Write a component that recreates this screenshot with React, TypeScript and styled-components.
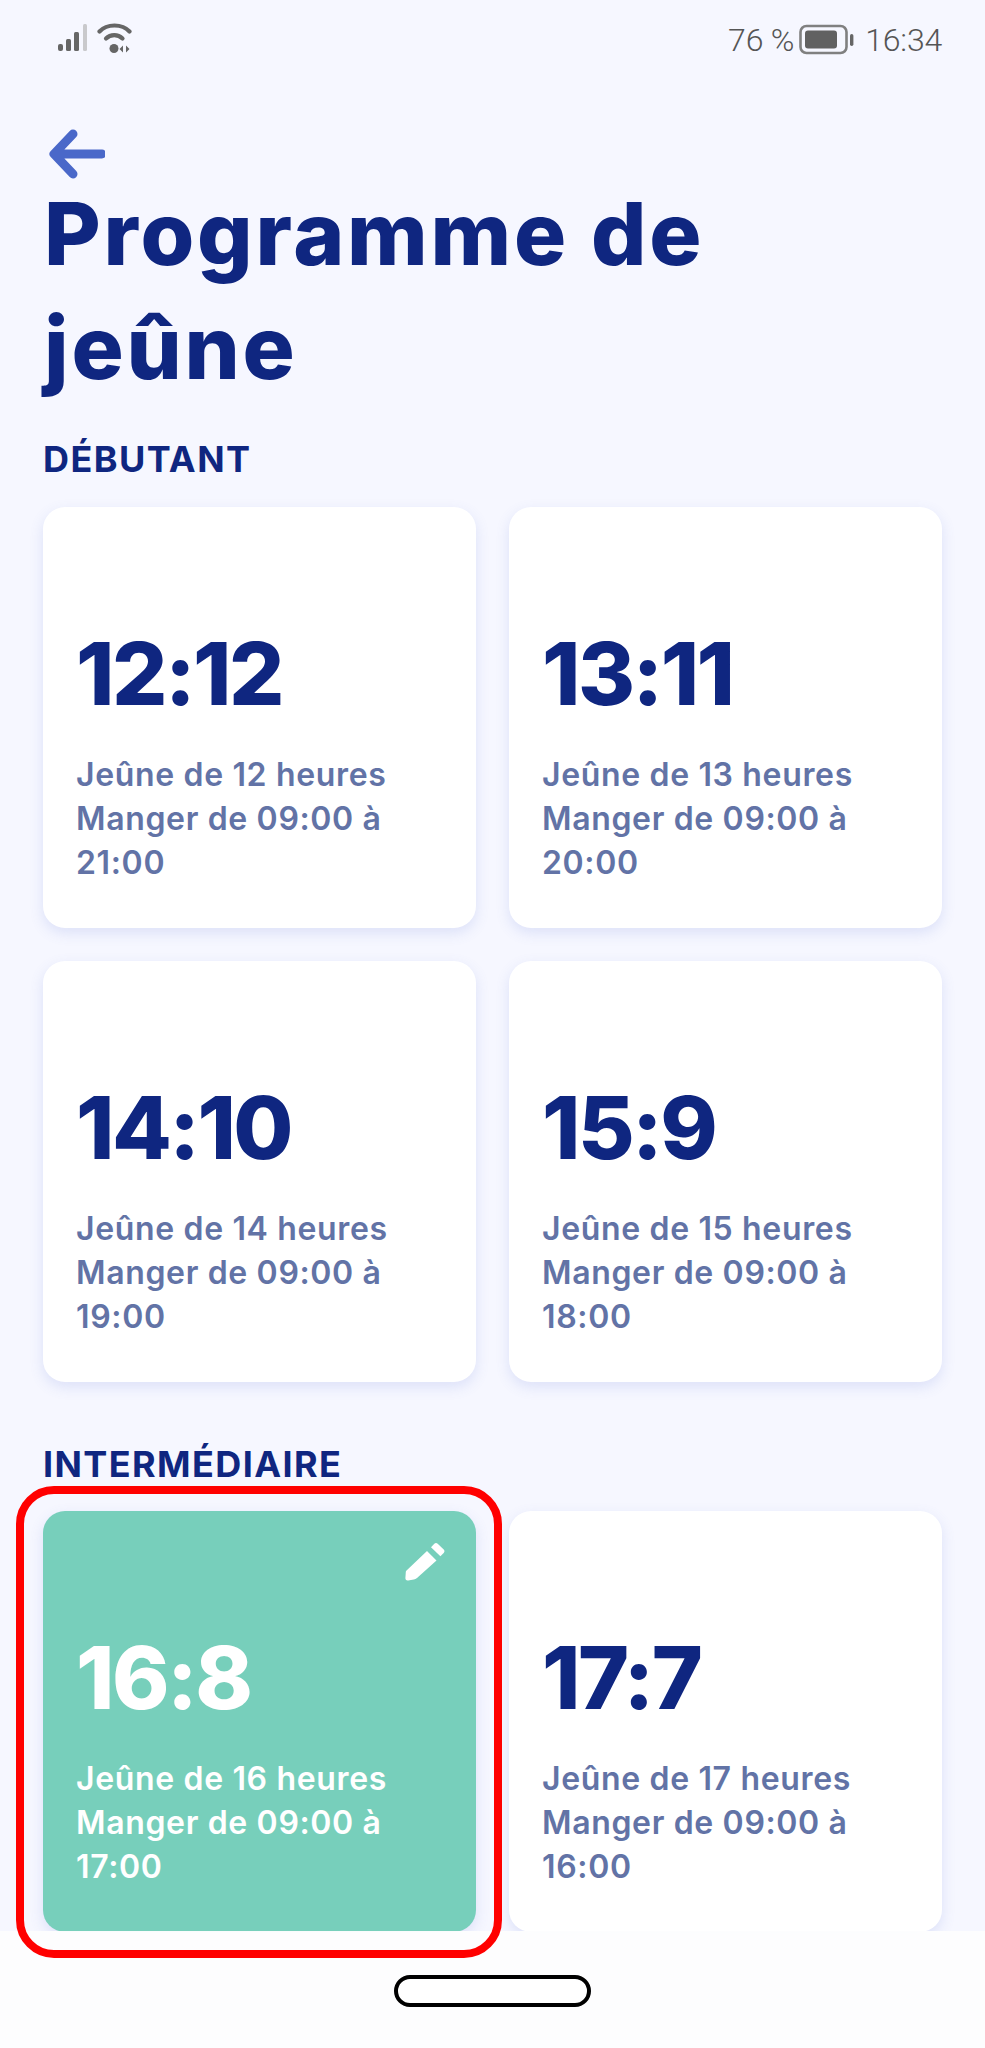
import React from "react";
import styled, { createGlobalStyle } from "styled-components";

const GlobalStyle = createGlobalStyle`
  html, body {
    margin: 0;
    padding: 0;
    background: #f6f7ff;
  }
  * { box-sizing: border-box; }
`;

const Screen = styled.div`
  position: relative;
  width: 985px;
  height: 2048px;
  overflow: hidden;
  background: #f6f7ff;
  font-family: Inter, "Liberation Sans", sans-serif;
`;

const StatusBar = styled.div`
  height: 80px;
  padding: 22px 43px 0 58px;
  display: flex;
  justify-content: space-between;
  align-items: flex-start;
  color: #676767;
`;

const StatusGroup = styled.div<{ $gap: number }>`
  display: flex;
  align-items: center;
  gap: ${(p) => p.$gap}px;
`;

const StatusText = styled.span<{ $offset?: number }>`
  margin-left: ${(p) => p.$offset ?? 0}px;
  font-family: Roboto, sans-serif;
  font-weight: 300;
  font-size: 32px;
  line-height: 36px;
  letter-spacing: -0.2px;
  color: #555;
`;

const BackButton = styled.div`
  height: 50px;
  margin: 49px 0 0 47px;
  display: flex;
`;

const Title = styled.h1`
  margin: -2px 0 0 44px;
  width: 800px;
  font-size: 87px;
  line-height: 114px;
  font-weight: 800;
  letter-spacing: 2.8px;
  color: #0f2680;
`;

const SectionLabel = styled.h2<{ $top: number }>`
  margin: ${(p) => p.$top}px 0 0 43px;
  height: 40px;
  font-size: 36px;
  line-height: 40px;
  font-weight: 700;
  letter-spacing: 1.4px;
  color: #0f2680;
`;

const Grid = styled.div<{ $top: number }>`
  margin-top: ${(p) => p.$top}px;
  padding: 0 43px;
  display: grid;
  grid-template-columns: 433px 433px;
  grid-auto-rows: 421px;
  gap: 33px;
`;

const Card = styled.div<{ $active?: boolean }>`
  position: relative;
  padding: 0 20px 43px 33px;
  display: flex;
  flex-direction: column;
  justify-content: flex-end;
  border-radius: 22px;
  background: ${(p) => (p.$active ? "#77cfbb" : "#ffffff")};
  box-shadow: 0 5px 14px rgba(90, 110, 210, 0.16);
`;

const Ratio = styled.div<{ $active?: boolean }>`
  font-size: 87px;
  line-height: 100px;
  font-weight: 800;
  letter-spacing: -2.5px;
  margin-bottom: 29px;
  color: ${(p) => (p.$active ? "#ffffff" : "#0f2680")};
`;

const Detail = styled.div<{ $active?: boolean }>`
  font-size: 32px;
  line-height: 44px;
  font-weight: 600;
  letter-spacing: 0.65px;
  color: ${(p) => (p.$active ? "#ffffff" : "#6273a6")};
`;

const EditIcon = styled.svg`
  position: absolute;
  top: 31px;
  right: 31px;
  width: 40px;
  height: 40px;
`;

const Highlight = styled.div`
  position: absolute;
  left: 16px;
  top: 1486px;
  width: 486px;
  height: 472px;
  border: 8px solid #ff0000;
  border-radius: 38px;
  pointer-events: none;
`;

const NavOverlay = styled.div`
  position: absolute;
  left: 0;
  right: 0;
  bottom: 0;
  height: 117px;
  display: flex;
  justify-content: center;
  padding-top: 44px;
  background: rgba(253, 253, 254, 0.97);
`;

const HomePill = styled.div`
  width: 197px;
  height: 32px;
  border: 4px solid #000;
  border-radius: 16px;
  background: #fff;
`;

type Plan = { ratio: string; hours: number; end: string; active?: boolean };

const beginner: Plan[] = [
  { ratio: "12:12", hours: 12, end: "21:00" },
  { ratio: "13:11", hours: 13, end: "20:00" },
  { ratio: "14:10", hours: 14, end: "19:00" },
  { ratio: "15:9", hours: 15, end: "18:00" },
];

const intermediate: Plan[] = [
  { ratio: "16:8", hours: 16, end: "17:00", active: true },
  { ratio: "17:7", hours: 17, end: "16:00" },
];

function PlanCard({ plan }: { plan: Plan }) {
  return (
    <Card $active={plan.active}>
      {plan.active && (
        <EditIcon viewBox="0 0 40 40">
          <path
            fill="#fff"
            d="M1 29 22 9l9.500 9.500L12 36c-1 .9-2 1.400-3.200 1.600l-5.600.8C1.400 38.700.300 37.600.400 36l.3-4.500c0-1 .1-1.800.3-2.500zM26 5.200l3.300-3.400c1-1 2.400-1 3.400 0l6 5.700c1 1 1 2.400 0 3.400l-3.300 3.300L26 5.200z"
          />
        </EditIcon>
      )}
      <Ratio $active={plan.active}>{plan.ratio}</Ratio>
      <Detail $active={plan.active}>
        Jeûne de {plan.hours} heures
        <br />
        Manger de 09:00 à {plan.end}
      </Detail>
    </Card>
  );
}

export default function App() {
  return (
    <Screen>
      <GlobalStyle />
      <StatusBar>
        <StatusGroup $gap={9}>
          <svg width="30" height="30" viewBox="0 0 30 30">
            <g fill="#666">
              <rect x="0" y="21" width="5" height="7" rx="2" />
              <rect x="8" y="16" width="5" height="12" rx="1.500" />
              <rect x="16" y="9" width="5" height="19" rx="1.500" />
            </g>
            <rect x="25" y="1" width="4" height="27" rx="1.500" fill="#c9c9cc" />
          </svg>
          <svg width="36" height="32" viewBox="0 0 36 32">
            <g fill="none" stroke="#666" strokeWidth="4.200" strokeLinecap="round">
              <path d="M2.500 9.500C10 1.500 25 1.500 32.500 9.500" />
              <path d="M9 16.500c4.500-4.500 12-4.500 16.500 0" />
            </g>
            <circle cx="17" cy="26.500" r="4.500" fill="#666" />
            <path d="M26 23.500v7l-3.500-3.500zM29 23.500v7l3.500-3.500z" fill="#666" />
          </svg>
        </StatusGroup>
        <StatusGroup $gap={5}>
          <StatusText>76 %</StatusText>
          <svg width="56" height="32" viewBox="0 0 56 32">
            <rect x="1.500" y="2" width="46" height="27" rx="6" fill="none" stroke="#808080" strokeWidth="2.600" />
            <rect x="6" y="6.500" width="32" height="18" rx="3" fill="#616161" />
            <rect x="51" y="10" width="3.400" height="12" rx="1.700" fill="#666" />
          </svg>
          <StatusText $offset={5}>16:34</StatusText>
        </StatusGroup>
      </StatusBar>

      <BackButton>
        <svg width="58" height="50" viewBox="0 0 58 50">
          <path
            d="M26 5 7 25l19 20M8 25h47"
            fill="none"
            stroke="#4a68c9"
            strokeWidth="9"
            strokeLinecap="round"
            strokeLinejoin="round"
          />
        </svg>
      </BackButton>

      <Title>Programme de jeûne</Title>

      <SectionLabel $top={34}>DÉBUTANT</SectionLabel>
      <Grid $top={28}>
        {beginner.map((plan) => (
          <PlanCard key={plan.ratio} plan={plan} />
        ))}
      </Grid>

      <SectionLabel $top={62}>INTERMÉDIAIRE</SectionLabel>
      <Grid $top={27}>
        {intermediate.map((plan) => (
          <PlanCard key={plan.ratio} plan={plan} />
        ))}
        <Card />
        <Card />
      </Grid>

      <NavOverlay>
        <HomePill />
      </NavOverlay>
      <Highlight />
    </Screen>
  );
}
